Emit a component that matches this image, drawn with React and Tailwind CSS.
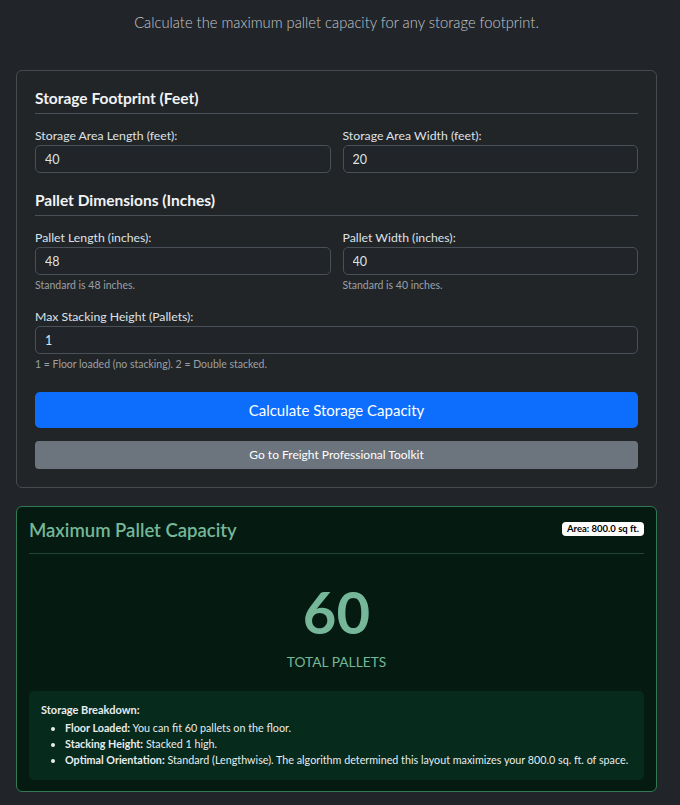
import React from 'react'

const font = { fontFamily: 'Lato, "Noto Sans", sans-serif' }

const Field = ({ label, value, help }) => (
  <div className="flex flex-col">
    <label className="text-[12.25px] leading-[18px] text-[#dee2e6]">{label}</label>
    <input
      defaultValue={value}
      className="mt-[0px] h-[28px] w-full rounded-[5px] border border-[#495057] bg-[#212529] px-[9px] text-[12.5px] text-[#dee2e6] outline-none"
    />
    {help && <span className="mt-[4px] text-[10.5px] leading-[13px] text-[#9aa0a6]">{help}</span>}
  </div>
)

const SectionTitle = ({ children }) => (
  <div className="border-b border-[#495057] pb-[4px]">
    <h2 className="text-[15.5px] font-bold leading-[22px] text-[#f1f3f5]">{children}</h2>
  </div>
)

export default function App() {
  return (
    <div className="min-h-[805px] bg-[#212529] pb-[12px] pl-[16px] pr-[23px] pt-[11px] text-[#dee2e6]" style={font}>
      <p className="text-center text-[14.75px] font-light leading-[22px] text-[#c3c7cb]">
        Calculate the maximum pallet capacity for any storage footprint.
      </p>

      <div className="mt-[37px] rounded-[6px] border border-[#464b50] bg-[#222528] px-[18px] pb-[18px] pt-[16px]">
        <SectionTitle>Storage Footprint (Feet)</SectionTitle>
        <div className="mt-[13px] grid grid-cols-2 gap-x-[12px]">
          <Field label="Storage Area Length (feet):" value="40" />
          <Field label="Storage Area Width (feet):" value="20" />
        </div>

        <div className="mt-[16px]">
          <SectionTitle>Pallet Dimensions (Inches)</SectionTitle>
        </div>
        <div className="mt-[13px] grid grid-cols-2 gap-x-[12px]">
          <Field label="Pallet Length (inches):" value="48" help="Standard is 48 inches." />
          <Field label="Pallet Width (inches):" value="40" help="Standard is 40 inches." />
        </div>

        <div className="mt-[16px]">
          <Field
            label="Max Stacking Height (Pallets):"
            value="1"
            help="1 = Floor loaded (no stacking). 2 = Double stacked."
          />
        </div>

        <button className="mt-[21px] flex h-[36px] w-full items-center justify-center rounded-[5px] bg-[#0d6efd] text-[15px] text-white">
          Calculate Storage Capacity
        </button>
        <button className="mt-[13px] flex h-[28px] w-full items-center justify-center rounded-[4px] bg-[#6c757d] text-[12px] text-white">
          Go to Freight Professional Toolkit
        </button>
      </div>

      <div className="mt-[18px] rounded-[6px] border border-[#2f7a55] bg-[#051b11] px-[12px] pb-[11px] pt-[11px]">
        <div className="flex items-start justify-between border-b border-[#1f4634] pb-[11px]">
          <h3 className="text-[18.5px] font-semibold leading-[24px] text-[#75b798]">Maximum Pallet Capacity</h3>
          <span className="mt-[4px] rounded-[4px] bg-white px-[5px] py-[1px] text-[9.5px] font-bold leading-[12px] text-black">
            Area: 800.0 sq ft.
          </span>
        </div>

        <div className="flex flex-col items-center pt-[20px]">
          <div className="text-[58px] font-bold leading-[76px] text-[#75b798]">60</div>
          <div className="mt-[2px] text-[13.75px] leading-[20px] text-[#75b798]">TOTAL PALLETS</div>
        </div>

        <div className="mt-[19px] rounded-[5px] bg-[#062a1b] px-[12px] pb-[12px] pt-[11px] text-[10.75px] leading-[16px] text-[#e9ecef]">
          <div className="text-[11px] font-bold">Storage Breakdown:</div>
          <ul className="mt-[2px] list-disc pl-[24px]">
            <li>
              <span className="font-bold">Floor Loaded:</span> You can fit 60 pallets on the floor.
            </li>
            <li>
              <span className="font-bold">Stacking Height:</span> Stacked 1 high.
            </li>
            <li>
              <span className="font-bold">Optimal Orientation:</span> Standard (Lengthwise). The algorithm
              determined this layout maximizes your 800.0 sq. ft. of space.
            </li>
          </ul>
        </div>
      </div>
    </div>
  )
}
